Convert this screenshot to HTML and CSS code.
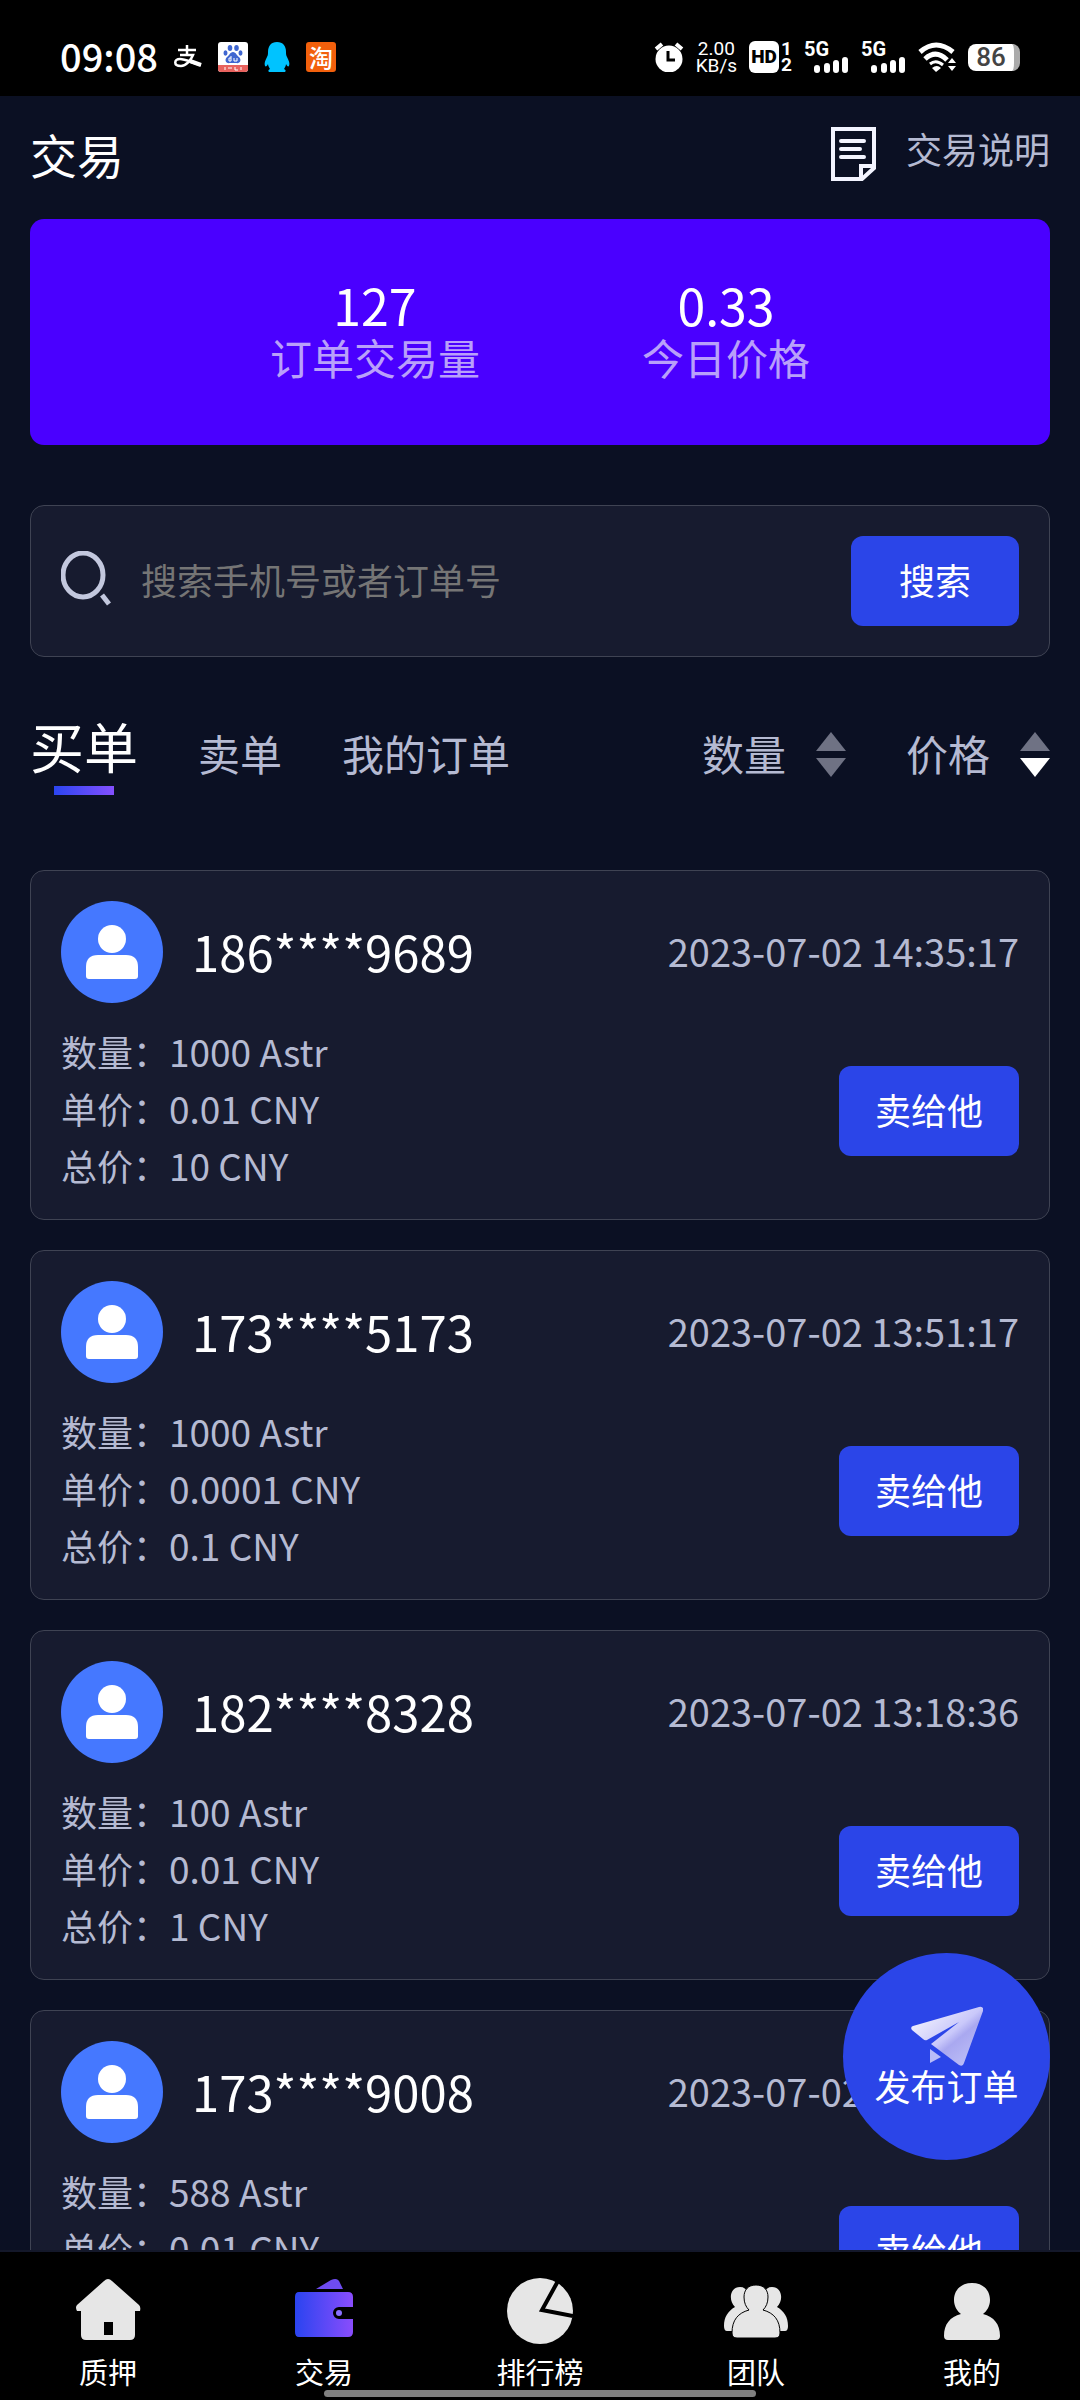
FILE: index.html
```html
<!DOCTYPE html>
<html lang="zh-CN">
<head>
    <meta charset="utf-8">
    <meta name="viewport" content="width=device-width, initial-scale=1">
    <title>交易</title>
    <link rel="stylesheet" href="styles.css">
</head>
<body>
    <div class="status-bar">
        <div class="status-left">
            <span class="clock">09:08</span>
            <svg class="alipay" width="28" height="24" viewBox="0 0 28 24" fill="none" stroke="#fff" stroke-width="2.500">
                <path d="M4 5h18M13 0v10M6 10h13c-2 5-7 11-12 11-8 0-7-7-1-7 6 0 12 4 21 6" />
                <path d="M16 16l11 4" stroke-width="4" />
            </svg>
            <svg class="baidu" width="30" height="30" viewBox="0 0 30 30">
                <rect width="30" height="30" rx="3" fill="#fff" />
                <path d="M0 23h30v4a3 3 0 0 1-3 3H3a3 3 0 0 1-3-3z" fill="#e8625e" />
                <g fill="#3f66d0">
                    <ellipse cx="12" cy="6" rx="2.300" ry="3" />
                    <ellipse cx="18.500" cy="6" rx="2.300" ry="3" />
                    <ellipse cx="7.500" cy="11" rx="2" ry="2.700" />
                    <ellipse cx="22.500" cy="11" rx="2" ry="2.700" />
                    <path d="M15 10c3 0 4 4 6 5 3 3 1 7-3 6h-6c-4 1-6-3-3-6 2-1 3-5 6-5z" />
                </g>
                <path d="M13 14v5h-2v-3h2M16 16v3h3v-3M7 28v-3M10 26h4M17 25v3h3M23 25v3" fill="none" stroke="#fff" />
            </svg>
            <svg class="qq" width="26" height="31" viewBox="0 0 26 31" fill="#00c3ff">
                <path d="M13 0c6 0 9 4 9 10 0 2 0 3 1 5 2 4 3 6 2 9-1 1-2 0-3-2 0 2-1 3-2 5 2 1 2 2 1 3H5c-1-1-1-2 1-3-1-2-2-3-2-5-1 2-2 3-3 2-1-3 0-5 2-9 1-2 1-3 1-5 0-6 3-10 9-10z" />
            </svg>
            <span class="taobao">淘</span>
        </div>
        <div class="status-right">
            <svg width="30" height="30" viewBox="0 0 30 30">
                <circle cx="15" cy="17" r="13.500" fill="#fff" />
                <path d="M2 7l6-5M28 7l-6-5" stroke="#fff" stroke-width="4" />
                <path d="M14 9v9h7" fill="none" stroke="#000" stroke-width="3" />
            </svg>
            <span class="speed">2.00<br>KB/s</span>
            <span class="hd"><b>HD</b><span>1<br>2</span></span>
            <span class="signal">
                <b>5G</b>
                <svg width="36" height="17" viewBox="0 0 36 17" stroke="#fff" stroke-width="6" stroke-linecap="round">
                    <path d="M4 12v2M14 10v4M23 7v7M32 4v10" />
                </svg>
            </span>
            <span class="signal">
                <b>5G</b>
                <svg width="36" height="17" viewBox="0 0 36 17" stroke="#fff" stroke-width="6" stroke-linecap="round">
                    <path d="M4 12v2M14 10v4M23 7v7M32 4v10" />
                </svg>
            </span>
            <svg width="38" height="30" viewBox="0 0 38 30" fill="none" stroke="#fff" stroke-width="5">
                <path d="M2 10q16-14 33 0M7 17q11-10 22 1" />
                <path d="M12 22q6-5 13 1" stroke-width="3" />
                <path d="M14 26q5-4 9 0l-5 4z" fill="#fff" stroke="none" />
                <path d="M30 21l4-5 4 5zM30 24h8l-4 5z" fill="#fff" stroke="none" />
            </svg>
            <span class="battery">86</span>
        </div>
    </div>

    <main class="page">
        <header class="header">
            <h1>交易</h1>
            <a class="help" href="#help">
                <svg width="45" height="54" viewBox="0 0 45 54" fill="none" stroke="#f3f4ff" stroke-width="4">
                    <path d="M2 2h41v39L31 52H2zM43 39H30v13" />
                    <path d="M10 14h23M10 22h19M10 30h23" stroke-linecap="round" />
                </svg>
                <span>交易说明</span>
            </a>
        </header>

        <section class="summary">
            <div class="stat">
                <strong>127</strong>
                <span>订单交易量</span>
            </div>
            <div class="stat">
                <strong>0.33</strong>
                <span>今日价格</span>
            </div>
        </section>

        <form class="search">
            <svg width="51" height="60" viewBox="0 0 51 60" fill="none" stroke="#c3c8de" stroke-width="5">
                <ellipse cx="22" cy="24" rx="20" ry="22" />
                <path d="M41 44l7 9" />
            </svg>
            <input type="text" placeholder="搜索手机号或者订单号" aria-label="搜索手机号或者订单号">
            <button class="btn" type="button">搜索</button>
        </form>

        <nav class="tabs">
            <a class="tab active" href="#buy">买单</a>
            <a class="tab" href="#sell">卖单</a>
            <a class="tab" href="#mine">我的订单</a>
            <button class="sort" type="button">数量
                <svg width="30" height="45" viewBox="0 0 30 45" fill="#6f7284">
                    <path d="M15 0l15 19H0z" />
                    <path d="M0 26h30L15 45z" />
                </svg>
            </button>
            <button class="sort" type="button">价格
                <svg width="30" height="45" viewBox="0 0 30 45" fill="#6f7284">
                    <path d="M15 0l15 19H0z" />
                    <path d="M0 26h30L15 45z" fill="#fff" />
                </svg>
            </button>
        </nav>

        <section class="orders">
            <article class="order">
                <div class="order-head">
                    <svg class="avatar" width="102" height="102" viewBox="0 0 102 102"><use href="#user" /></svg>
                    <span class="phone">186****9689</span>
                    <time>2023-07-02 14:35:17</time>
                </div>
                <div class="order-body">
                    <dl>
                        <dt>数量：</dt><dd>1000 Astr</dd>
                        <dt>单价：</dt><dd>0.01 CNY</dd>
                        <dt>总价：</dt><dd>10 CNY</dd>
                    </dl>
                    <button class="btn" type="button">卖给他</button>
                </div>
            </article>

            <article class="order">
                <div class="order-head">
                    <svg class="avatar" width="102" height="102" viewBox="0 0 102 102"><use href="#user" /></svg>
                    <span class="phone">173****5173</span>
                    <time>2023-07-02 13:51:17</time>
                </div>
                <div class="order-body">
                    <dl>
                        <dt>数量：</dt><dd>1000 Astr</dd>
                        <dt>单价：</dt><dd>0.0001 CNY</dd>
                        <dt>总价：</dt><dd>0.1 CNY</dd>
                    </dl>
                    <button class="btn" type="button">卖给他</button>
                </div>
            </article>

            <article class="order">
                <div class="order-head">
                    <svg class="avatar" width="102" height="102" viewBox="0 0 102 102"><use href="#user" /></svg>
                    <span class="phone">182****8328</span>
                    <time>2023-07-02 13:18:36</time>
                </div>
                <div class="order-body">
                    <dl>
                        <dt>数量：</dt><dd>100 Astr</dd>
                        <dt>单价：</dt><dd>0.01 CNY</dd>
                        <dt>总价：</dt><dd>1 CNY</dd>
                    </dl>
                    <button class="btn" type="button">卖给他</button>
                </div>
            </article>

            <article class="order">
                <div class="order-head">
                    <svg class="avatar" width="102" height="102" viewBox="0 0 102 102"><use href="#user" /></svg>
                    <span class="phone">173****9008</span>
                    <time>2023-07-02 13:05:42</time>
                </div>
                <div class="order-body">
                    <dl>
                        <dt>数量：</dt><dd>588 Astr</dd>
                        <dt>单价：</dt><dd>0.01 CNY</dd>
                        <dt>总价：</dt><dd>5.88 CNY</dd>
                    </dl>
                    <button class="btn" type="button">卖给他</button>
                </div>
            </article>
        </section>

        <button class="publish" type="button">
            <svg width="72" height="60" viewBox="0 0 72 60">
                <defs>
                    <linearGradient id="plane" x1="0" y1="0" x2="1" y2="1">
                        <stop offset="0" stop-color="#fff" />
                        <stop offset="0.500" stop-color="#c9c8fa" />
                        <stop offset="0.600" stop-color="#a9a8f0" />
                        <stop offset="1" stop-color="#c4c6fa" />
                    </linearGradient>
                </defs>
                <path d="M2 20L68 1q5-1 4 4L53 57q-1 4-5 2L20 38l28-22-32 18q-2 1-4-1L1 24q-2-3 1-4z" fill="url(#plane)" />
                <path d="M19 43l11 8-11 6z" fill="#b9bcf8" />
            </svg>
            <span>发布订单</span>
        </button>
    </main>

    <nav class="tabbar">
        <a href="#pledge">
            <svg width="66" height="66" viewBox="0 0 66 66" fill="#e6e6e6">
                <path d="M29 3q4-4 8 0l27 24q2 2 1 6h-5v24q0 5-5 5H11q-5 0-5-5V33H2q-2-4 0-6zM29 44v13h9V44z" fill-rule="evenodd" />
            </svg>
            <span>质押</span>
        </a>
        <a href="#trade">
            <svg width="66" height="66" viewBox="0 0 66 66">
                <defs>
                    <linearGradient id="wallet" x1="0" y1="0" x2="1" y2="0">
                        <stop offset="0" stop-color="#2a44f0" />
                        <stop offset="1" stop-color="#8a4dfc" />
                    </linearGradient>
                </defs>
                <path d="M25 11l15-9q7-3 9 3l3 6z" fill="#6e4cf0" />
                <path d="M8 14h49q5 0 5 5v10H48a6 6 0 0 0 0 12h14v13q0 5-5 5H8q-4 0-4-5V19q0-5 4-5z" fill="url(#wallet)" />
                <circle cx="48" cy="35" r="3" fill="#8a70ff" />
            </svg>
            <span>交易</span>
        </a>
        <a href="#rank">
            <svg width="66" height="66" viewBox="0 0 66 66">
                <circle cx="33" cy="33" r="33" fill="#e6e6e6" />
                <path d="M51 3L35 32l31 6" fill="none" stroke="#000" stroke-width="4" />
            </svg>
            <span>排行榜</span>
        </a>
        <a href="#team">
            <svg width="66" height="66" viewBox="0 0 66 66" fill="#e6e6e6">
                <path d="M9 53H4q-3 0-3-5c0-9 4-15 11-19-7-7-5-20 5-20 4 0 6 2 8 5v20zM57 53h5q3 0 3-5c0-9-4-15-11-19 7-7 5-20-5-20-4 0-6 2-8 5v20z" />
                <path d="M33 7c8 0 12 5 12 12 0 6-2 10-5 13 11 3 17 10 17 23q0 5-5 5H14q-5 0-5-5c0-13 6-20 17-23-3-3-5-7-5-13 0-7 4-12 12-12z" stroke="#000" stroke-width="1" />
            </svg>
            <span>团队</span>
        </a>
        <a href="#me">
            <svg width="66" height="66" viewBox="0 0 66 66" fill="#e6e6e6">
                <path d="M33 5c11 0 18 7 18 17 0 6-3 11-7 14 11 3 17 10 17 22q0 4-4 4H9q-4 0-4-4c0-12 6-19 17-22-4-3-7-8-7-14 0-10 7-17 18-17z" />
            </svg>
            <span>我的</span>
        </a>
        <div class="home-bar"></div>
    </nav>

    <svg class="symbols" aria-hidden="true">
        <symbol id="user" viewBox="0 0 102 102">
            <circle cx="51" cy="51" r="51" fill="#4578ff" />
            <circle cx="51" cy="38" r="14" fill="#fff" />
            <path d="M25 66q0-12 12-12h28q12 0 12 12v9q0 3-3 3H28q-3 0-3-3z" fill="#fff" />
        </symbol>
    </svg>
</body>
</html>
```

FILE: styles.css
```css
* {
    box-sizing: border-box;
    margin: 0;
    padding: 0;
}
body {
    display: flex;
    flex-direction: column;
    height: 100vh;
    overflow: hidden;
    background: #0b1023;
    color: #fff;
    font-family: "Noto Sans CJK SC", "Noto Sans", sans-serif;
    font-size: 36px;
}
a {
    color: inherit;
    text-decoration: none;
}
button {
    border: none;
    background: none;
    color: inherit;
    font: inherit;
    cursor: pointer;
}
svg {
    display: block;
    flex: none;
}
.symbols {
    position: absolute;
    width: 0;
    height: 0;
}

/* status bar */
.status-bar {
    display: flex;
    flex: none;
    justify-content: space-between;
    height: 96px;
    padding: 18px 60px 0;
    background: #000;
}
.status-left,
.status-right {
    display: flex;
    align-items: center;
}
.status-left {
    gap: 16px;
}
.status-right {
    gap: 12px;
}
.clock {
    padding-bottom: 4px;
    font-size: 38px;
    font-weight: 500;
}
.taobao {
    width: 30px;
    border-radius: 3px;
    background: #f2600c;
    font-size: 24px;
    font-weight: 500;
    line-height: 30px;
    text-align: center;
}
.speed {
    font-family: Roboto, sans-serif;
    font-size: 19px;
    line-height: 17px;
    text-align: center;
}
.hd {
    display: flex;
    gap: 2px;
    font-family: Roboto, sans-serif;
    font-size: 19px;
    font-weight: 700;
    line-height: 16px;
}
.hd b {
    width: 30px;
    border-radius: 6px;
    background: #fff;
    color: #000;
    line-height: 32px;
    text-align: center;
}
.signal {
    display: flex;
    flex-direction: column;
    width: 45px;
    height: 30px;
    font-family: Roboto, sans-serif;
    font-size: 20px;
    line-height: 14px;
}
.signal svg {
    align-self: flex-end;
}
.battery {
    width: 52px;
    border-right: 6px solid #aaa;
    border-radius: 8px;
    background: #fff;
    color: #444;
    font-family: Roboto, sans-serif;
    font-size: 26px;
    font-weight: 500;
    line-height: 27px;
    text-align: center;
}

/* page */
.page {
    position: relative;
    flex: 1;
    min-height: 0;
    overflow: hidden;
    padding: 0 30px;
}
.header {
    display: flex;
    align-items: center;
    justify-content: space-between;
    height: 123px;
    padding-bottom: 8px;
}
.header h1 {
    font-size: 47px;
    font-weight: 400;
}
.help {
    display: flex;
    align-items: center;
    gap: 30px;
    color: #b5bad2;
}
.help span {
    padding-bottom: 12px;
}
.summary {
    display: flex;
    justify-content: center;
    gap: 162px;
    height: 226px;
    padding-top: 56px;
    border-radius: 14px;
    background: #4a00ff;
}
.stat {
    display: flex;
    flex-direction: column;
    align-items: center;
}
.stat strong {
    font-size: 50px;
    font-weight: 400;
    line-height: 58px;
}
.stat span {
    color: #b9a0fa;
    font-size: 42px;
    line-height: 48px;
}
.search {
    display: flex;
    align-items: center;
    height: 152px;
    margin-top: 60px;
    padding: 0 30px;
    border: 1px solid #3f4353;
    border-radius: 14px;
    background: #171b2f;
}
.search input {
    flex: 1;
    min-width: 0;
    padding: 0 29px 4px;
    border: none;
    outline: none;
    background: none;
    color: #fff;
    font: inherit;
}
.search input::placeholder {
    color: #757575;
}
.btn {
    height: 90px;
    padding: 0 36px 4px;
    border-radius: 12px;
    background: #2b45e8;
}
.search .btn {
    padding: 0 48px 4px;
}

/* tabs and sorting */
.tabs {
    display: flex;
    align-items: center;
    gap: 60px;
    height: 213px;
    padding-bottom: 18px;
    color: #b5bad2;
    font-size: 42px;
}
.tab {
    padding-bottom: 4px;
}
.tab.active {
    padding-bottom: 0;
    color: #fff;
    font-size: 54px;
    line-height: 62px;
}
.tab.active::after {
    display: block;
    width: 60px;
    height: 9px;
    margin: 9px auto 0;
    background: linear-gradient(90deg, #2b45f0, #8450ff);
    content: "";
}
.sort {
    display: flex;
    align-items: center;
    gap: 30px;
    padding-bottom: 4px;
}
.sort svg {
    margin-top: 4px;
}
.tab + .sort {
    margin-left: auto;
}

/* order list */
.orders {
    display: flex;
    flex-direction: column;
    gap: 30px;
}
.order {
    height: 350px;
    padding: 30px;
    border: 1px solid #3f4353;
    border-radius: 14px;
    background: #171b2f;
}
.order-head {
    display: flex;
    align-items: center;
    height: 102px;
}
.phone {
    padding-bottom: 4px;
    margin-left: 29px;
    font-size: 49px;
}
.order time {
    padding-bottom: 4px;
    margin-left: auto;
    color: #b5bad2;
    font-size: 38px;
}
.order-body {
    display: flex;
    align-items: center;
    justify-content: space-between;
    margin-top: 20px;
}
.order dl {
    display: grid;
    grid-template-columns: auto auto;
    padding-bottom: 4px;
    color: #b5bad2;
    line-height: 57px;
}
.order dd {
    font-size: 37px;
}

/* floating publish button */
.publish {
    position: absolute;
    right: 30px;
    bottom: 90px;
    display: flex;
    flex-direction: column;
    align-items: center;
    width: 207px;
    height: 207px;
    padding-top: 53px;
    border-radius: 50%;
    background: #2b45e8;
    line-height: 38px;
}

/* bottom tab bar */
.tabbar {
    position: relative;
    display: flex;
    flex: none;
    height: 150px;
    border-top: 2px solid #14182a;
    background: #000;
    font-size: 29px;
}
.tabbar a {
    display: flex;
    flex: 1;
    flex-direction: column;
    align-items: center;
    gap: 6px;
    padding-top: 26px;
    line-height: 42px;
}
.home-bar {
    position: absolute;
    bottom: 3px;
    left: 30%;
    width: 40%;
    height: 7px;
    border-radius: 4px;
    background: #808080;
}
```
